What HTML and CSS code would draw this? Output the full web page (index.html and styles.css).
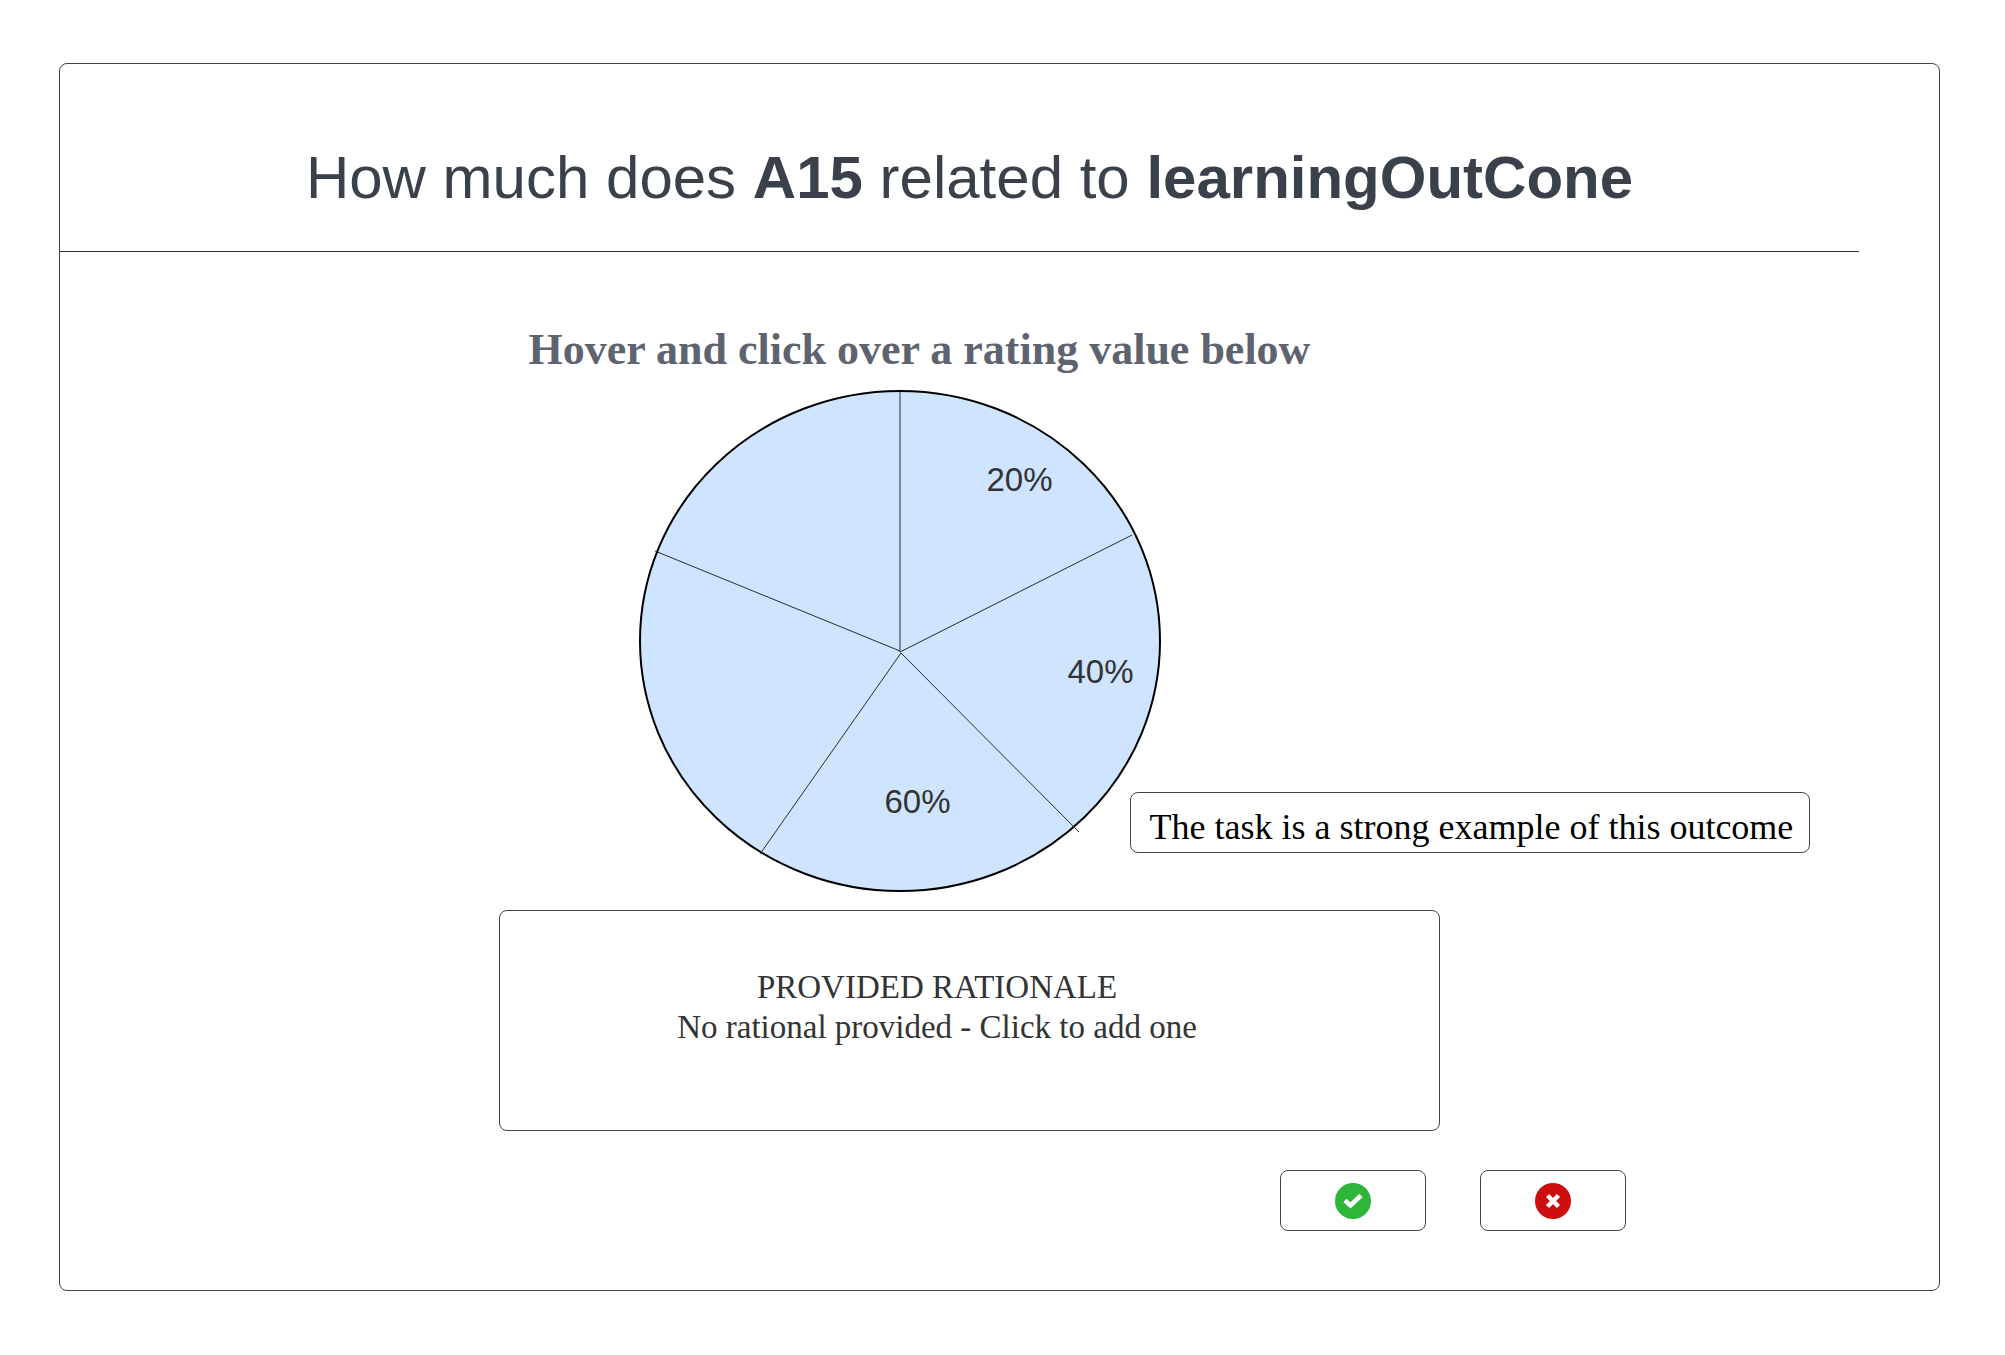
FILE: index.html
```html
<!DOCTYPE html>
<html lang="en">
<head>
<meta charset="utf-8">
<meta name="viewport" content="width=device-width, initial-scale=1">
<title>Rate the relation</title>
<link rel="stylesheet" href="styles.css">
</head>
<body>
<main class="panel">
  <header class="panel-header">
    <h1 class="title">How much does <strong>A15</strong> related to <strong>learningOutCone</strong></h1>
  </header>
  <div class="panel-body">
    <h2 class="subtitle">Hover and click over a rating value below</h2>
    <div class="rating">
      <div class="pie">
        <svg class="pie-chart" viewBox="0 0 522 502" aria-hidden="true">
          <ellipse class="pie-disc" cx="261" cy="251" rx="260" ry="250"/>
          <path class="pie-line" d="M261 2V262L493 145M261 261L16 161M262 263L440 442M262 263L121 464"/>
        </svg>
        <button type="button" class="rate rate-20">20%</button>
        <button type="button" class="rate rate-40">40%</button>
        <button type="button" class="rate rate-60" aria-describedby="rate-tip">60%</button>
        <div class="tooltip" id="rate-tip" role="tooltip">The task is a strong example of this outcome</div>
      </div>
    </div>
    <button type="button" class="rationale">PROVIDED RATIONALE<br>No rational provided - Click to add one</button>
    <div class="actions">
      <button type="button" class="action" aria-label="Confirm">
        <svg class="icon" viewBox="0 0 36 36" aria-hidden="true">
          <circle cx="18" cy="18" r="18" fill="#2eb63a"/>
          <path d="M10 17.500L15.500 22.500L26 12.500" fill="none" stroke="#fff" stroke-width="4.500"/>
        </svg>
      </button>
      <button type="button" class="action" aria-label="Cancel">
        <svg class="icon" viewBox="0 0 36 36" aria-hidden="true">
          <circle cx="18" cy="18" r="18" fill="#cc0e0e"/>
          <path d="M12.500 12.500L23.500 23.500M23.500 12.500L12.500 23.500" fill="none" stroke="#fff" stroke-width="4.500"/>
        </svg>
      </button>
    </div>
  </div>
</main>
</body>
</html>
```
FILE: styles.css
```css
* {
  box-sizing: border-box;
}

body {
  margin: 0;
  padding: 63px 65px 63px 59px;
  background: #fff;
  color: #333;
  font-family: "Liberation Serif", "Times New Roman", serif;
}

button {
  margin: 0;
  padding: 0;
  border: 0;
  background: none;
  color: inherit;
  font: inherit;
  cursor: pointer;
}

.panel {
  padding-bottom: 59px;
  border: 1px solid #444;
  border-radius: 8px;
}

.panel-header {
  margin-right: 80px;
  padding: 78px 0 37px 20px;
  border-bottom: 1px solid #333;
}

.title {
  margin: 0;
  color: #3a414a;
  font: 400 60px/72px "Liberation Sans", Arial, sans-serif;
  text-align: center;
}

.panel-body {
  display: flex;
  flex-direction: column;
  align-items: center;
  padding: 72px 80px 0 20px;
}

.subtitle {
  margin: 0;
  padding-right: 100px;
  color: #5d6470;
  font-size: 44px;
  font-weight: 700;
  line-height: 52px;
}

.rating {
  padding: 14px 140px 18px 0;
}

.pie {
  position: relative;
}

.pie-chart {
  display: block;
  width: 522px;
}

.pie-disc {
  fill: #cfe4ff;
  stroke: #000;
  stroke-width: 2;
}

.pie-line {
  fill: none;
  stroke: #282c33;
  stroke-width: 1;
}

.rate {
  position: absolute;
  font: 33px/40px "Liberation Sans", Arial, sans-serif;
}

.rate-20 {
  top: 70px;
  left: 348px;
}

.rate-40 {
  top: 262px;
  left: 429px;
}

.rate-60 {
  top: 392px;
  left: 246px;
}

.tooltip {
  position: absolute;
  top: 402px;
  left: 491px;
  padding: 13px 16px 4px 19px;
  border: 1px solid #444;
  border-radius: 8px;
  background: #fff;
  color: #000;
  font-size: 36px;
  line-height: 42px;
  white-space: nowrap;
}

.rationale {
  width: 100%;
  max-width: 941px;
  min-height: 221px;
  padding: 0 65px 28px 0;
  border: 1px solid #444;
  border-radius: 8px;
  font-size: 33px;
  line-height: 40px;
}

.actions {
  display: flex;
  gap: 54px;
  padding: 39px 0 0 966px;
}

.action {
  display: grid;
  place-items: center;
  width: 146px;
  height: 61px;
  border: 1px solid #444;
  border-radius: 8px;
}

.icon {
  display: block;
  width: 36px;
  height: 36px;
}
```
